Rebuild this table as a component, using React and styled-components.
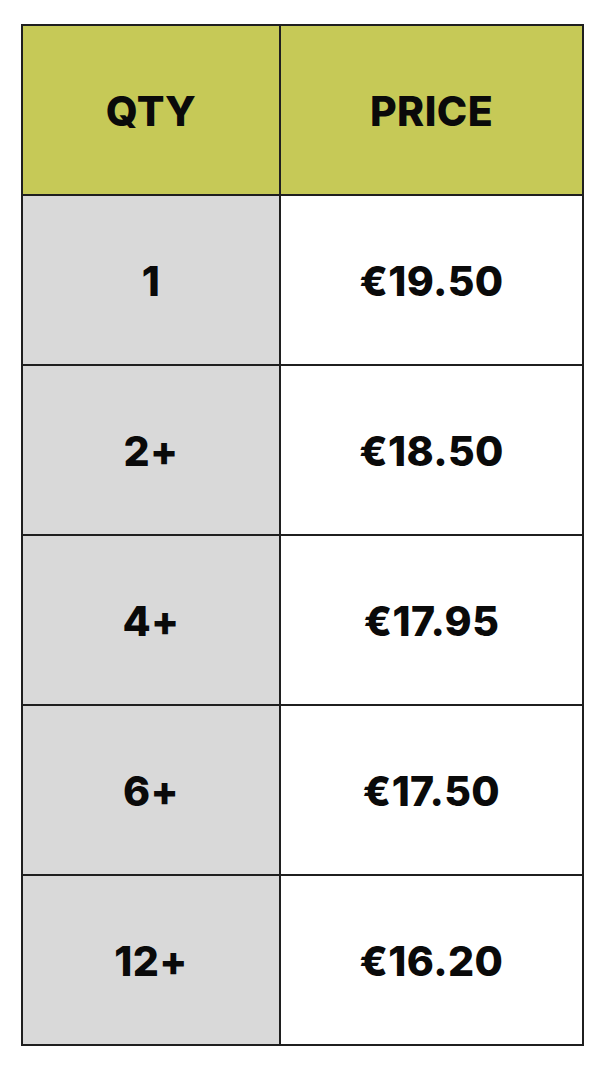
import React from "react";
import styled, { createGlobalStyle } from "styled-components";

const Global = createGlobalStyle`
  html, body { margin: 0; padding: 0; background: #ffffff; }
  body { font-family: Inter, "Liberation Sans", sans-serif; }
`;

const Page = styled.div`
  padding: 24px 0 0 21px;
  width: 602px;
  height: 1067px;
  box-sizing: border-box;
`;

const Table = styled.div`
  width: 563px;
  height: 1022px;
  box-sizing: border-box;
  display: grid;
  grid-template-columns: 256px 1fr;
  grid-template-rows: repeat(6, 1fr);
  gap: 2px;
  padding: 2px;
  background: #1f1f1f;
`;

const Cell = styled.div`
  display: flex;
  align-items: center;
  justify-content: center;
  padding-top: 2px;
  background: ${(p) => (p.$kind === "head" ? "#c6c957" : p.$kind === "qty" ? "#d9d9d9" : "#ffffff")};
  color: #0a0a0a;
  font-family: Inter, "Liberation Sans", sans-serif;
  font-weight: 800;
  font-size: 41px;
  letter-spacing: 0.4px;
`;

const rows = [
  ["1", "€19.50"],
  ["2+", "€18.50"],
  ["4+", "€17.95"],
  ["6+", "€17.50"],
  ["12+", "€16.20"],
];

export default function App() {
  return (
    <>
      <Global />
      <Page>
        <Table>
          <Cell $kind="head">QTY</Cell>
          <Cell $kind="head">PRICE</Cell>
          {rows.map(([q, p]) => (
            <React.Fragment key={q}>
              <Cell $kind="qty">{q}</Cell>
              <Cell $kind="price">{p}</Cell>
            </React.Fragment>
          ))}
        </Table>
      </Page>
    </>
  );
}
